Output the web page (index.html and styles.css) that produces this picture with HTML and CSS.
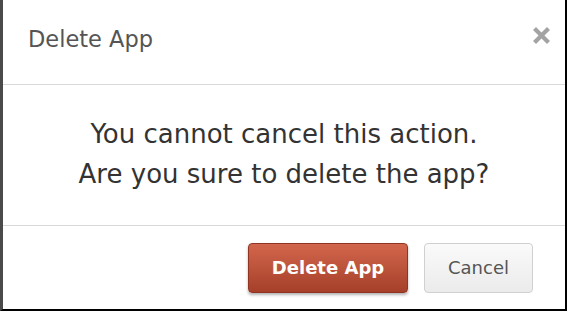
FILE: index.html
```html
<!DOCTYPE html>
<html>
<head>
    <meta charset="UTF-8">
    <title>Delete App</title>
    <link rel="stylesheet" href="styles.css">
</head>
<body>
    <div class="dialog">
        <div class="dialog-header">
            <span class="dialog-title">Delete App</span>
            <svg class="dialog-close" width="17" height="17" viewBox="0 0 17 17">
                <path d="M3 3 L14 14 M14 3 L3 14" stroke="#a3a3a3" stroke-width="4.2" stroke-linecap="square" fill="none"/>
            </svg>
        </div>
        <div class="dialog-body">
            <p>You cannot cancel this action.<br>Are you sure to delete the app?</p>
        </div>
        <div class="dialog-footer">
            <button class="btn btn-danger">Delete App</button>
            <button class="btn btn-normal">Cancel</button>
        </div>
    </div>
</body>
</html>
```

FILE: styles.css
```css
body {
    margin: 0;
    font-family: "DejaVu Sans", sans-serif;
    background: #fff;
}

.dialog {
    width: 567px;
    height: 311px;
    box-sizing: border-box;
    border-left: 3px solid #4a4a4a;
    border-right: 2px solid #000;
    border-bottom: 2px solid #000;
    display: flex;
    flex-direction: column;
}

.dialog-header {
    height: 84px;
    border-bottom: 1px solid #d8d8d8;
    display: flex;
    align-items: center;
    justify-content: space-between;
    padding: 0 15px 0 25px;
}

.dialog-title {
    font-size: 22.5px;
    color: #555;
    margin-top: -6px;
}

.dialog-close {
    margin-top: -13px;
}

.dialog-body {
    height: 140px;
    display: flex;
    align-items: center;
    justify-content: center;
}

.dialog-body p {
    margin: 0 0 2px;
    text-align: center;
    font-size: 26px;
    line-height: 40px;
    color: #333;
}

.dialog-footer {
    flex: 1;
    border-top: 1px solid #d8d8d8;
    display: flex;
    justify-content: flex-end;
    align-items: center;
    gap: 16px;
    padding: 0 32px 0 0;
}

.btn {
    height: 50px;
    border-radius: 4px;
    font-family: inherit;
    font-size: 18px;
}

.btn-danger {
    width: 160px;
    color: #fff;
    font-weight: bold;
    background: linear-gradient(#d2664c, #a6402a);
    border: 1px solid #8f3522;
    box-shadow: 0 2px 3px rgba(0, 0, 0, 0.3);
}

.btn-normal {
    width: 109px;
    color: #555;
    background: linear-gradient(#fafafa, #ebebeb);
    border: 1px solid #d0d0d0;
}
```
